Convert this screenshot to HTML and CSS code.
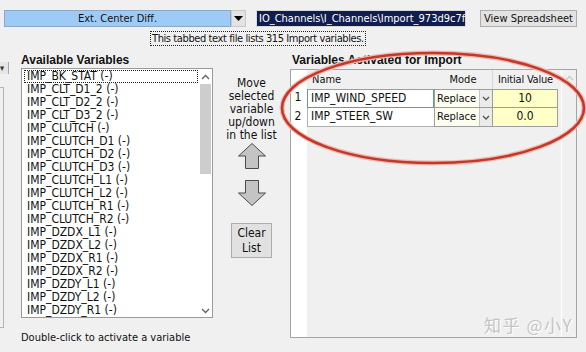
FILE: index.html
```html
<!DOCTYPE html>
<html lang="en">
<head>
  <meta charset="UTF-8">
  <title>Import Variables</title>
  <link rel="stylesheet" href="styles.css">
</head>
<body>
<div class="window">

  <!-- Top bar -->
  <div class="toolbar">
    <div class="combo">
      <span class="combo-value">Ext. Center Diff.</span>
      <span class="combo-btn"><svg width="9" height="5" viewBox="0 0 9 5"><polygon points="0,0 9,0 4.5,5" fill="#000"/></svg></span>
    </div>
    <div class="path-field">IO_Channels\I_Channels\Import_973d9c7f</div>
    <button class="btn view-btn">View Spreadsheet</button>
  </div>

  <div class="note-row">
    <span class="note">This tabbed text file lists 315 Import variables.</span>
  </div>

  <div class="main">
    <!-- left edge of the neighbouring panel -->
    <div class="edge-stub">
      <div class="stub-combo">&#9662;</div>
      <div class="stub-frame"></div>
    </div>

    <!-- Available variables -->
    <section class="available">
      <h2>Available Variables</h2>
      <div class="listbox">
        <ul class="var-list">
          <li class="focused">IMP_BK_STAT (-)</li>
          <li>IMP_CLT_D1_2 (-)</li>
          <li>IMP_CLT_D2_2 (-)</li>
          <li>IMP_CLT_D3_2 (-)</li>
          <li>IMP_CLUTCH (-)</li>
          <li>IMP_CLUTCH_D1 (-)</li>
          <li>IMP_CLUTCH_D2 (-)</li>
          <li>IMP_CLUTCH_D3 (-)</li>
          <li>IMP_CLUTCH_L1 (-)</li>
          <li>IMP_CLUTCH_L2 (-)</li>
          <li>IMP_CLUTCH_R1 (-)</li>
          <li>IMP_CLUTCH_R2 (-)</li>
          <li>IMP_DZDX_L1 (-)</li>
          <li>IMP_DZDX_L2 (-)</li>
          <li>IMP_DZDX_R1 (-)</li>
          <li>IMP_DZDX_R2 (-)</li>
          <li>IMP_DZDY_L1 (-)</li>
          <li>IMP_DZDY_L2 (-)</li>
          <li>IMP_DZDY_R1 (-)</li>
        </ul>
        <div class="vscroll">
          <svg class="chev" width="9" height="6" viewBox="0 0 9 6"><polyline points="1,5 4.5,1.5 8,5" fill="none" stroke="#606060" stroke-width="1.3"/></svg>
          <div class="thumb"></div>
          <div class="track"></div>
          <svg class="chev" width="9" height="6" viewBox="0 0 9 6"><polyline points="1,1 4.5,4.5 8,1" fill="none" stroke="#606060" stroke-width="1.3"/></svg>
        </div>
      </div>
      <p class="hint">Double-click to activate a variable</p>
    </section>

    <!-- Move / clear controls -->
    <div class="movers">
      <p class="move-text">Move<br>selected<br>variable<br>up/down<br>in the list</p>
      <svg class="arrow" width="28" height="26" viewBox="0 0 28 26"><polygon points="14,0.5 27.5,13 20.5,13 20.5,25.5 7.5,25.5 7.5,13 0.5,13" fill="#c4c4c4" stroke="#4a4a4a"/></svg>
      <svg class="arrow down" width="28" height="26" viewBox="0 0 28 26"><polygon points="14,25.5 27.5,13 20.5,13 20.5,0.5 7.5,0.5 7.5,13 0.5,13" fill="#c4c4c4" stroke="#4a4a4a"/></svg>
      <button class="btn clear-btn">Clear<br>List</button>
    </div>

    <!-- Activated variables -->
    <section class="activated">
      <h2>Variables Activated for Import</h2>
      <div class="grid-box">
        <div class="grid">
          <div class="grid-row head">
            <div class="cell num"></div>
            <div class="cell name">Name</div>
            <div class="cell mode">Mode</div>
            <div class="cell value">Initial Value</div>
          </div>
          <div class="grid-row">
            <div class="cell num">1</div>
            <div class="cell name active">IMP_WIND_SPEED</div>
            <div class="cell mode"><span>Replace</span><span class="drop"><svg width="8" height="5" viewBox="0 0 8 5"><polyline points="1,1 4,4 7,1" fill="none" stroke="#555" stroke-width="1.3"/></svg></span></div>
            <div class="cell value">10</div>
          </div>
          <div class="grid-row">
            <div class="cell num">2</div>
            <div class="cell name">IMP_STEER_SW</div>
            <div class="cell mode"><span>Replace</span><span class="drop"><svg width="8" height="5" viewBox="0 0 8 5"><polyline points="1,1 4,4 7,1" fill="none" stroke="#555" stroke-width="1.3"/></svg></span></div>
            <div class="cell value">0.0</div>
          </div>
        </div>
        <div class="grid-scroll">
          <svg width="9" height="6" viewBox="0 0 9 6"><polyline points="1,5 4.5,1.5 8,5" fill="none" stroke="#c8c8c8" stroke-width="1.3"/></svg>
        </div>
        <span class="watermark">知乎 @小Y</span>
      </div>
      <p class="hint">Double-click on a name box to deactivate a variable</p>
    </section>
  </div>

  <!-- red annotation ring -->
  <svg class="annotation" width="586" height="352" viewBox="0 0 586 352">
    <ellipse cx="433" cy="108" rx="151" ry="55" fill="none" stroke="#f2b8b0" stroke-width="5"/>
    <ellipse cx="433" cy="108" rx="151" ry="55" fill="none" stroke="#c0392b" stroke-width="2.6"/>
  </svg>
</div>
</body>
</html>
```

FILE: styles.css
```css
* {
  box-sizing: border-box;
}

body {
  margin: 0;
  background-color: #f0f0f0;
  font-family: "DejaVu Sans Condensed", "Liberation Sans", sans-serif;
  font-size: 11px;
  color: #111;
}

.window {
  position: relative;
  width: 586px;
  height: 352px;
  overflow: hidden;
}

/* Top bar */
.toolbar {
  display: flex;
  align-items: center;
  padding: 9px 0 0 4px;
  height: 28px;
}

.combo {
  display: flex;
  width: 242px;
  height: 17px;
}

.combo-value {
  flex: 1;
  background-color: #9ecbf6;
  border: 1px solid #8aa9c6;
  text-align: center;
  line-height: 15px;
}

.combo-btn {
  width: 15px;
  display: flex;
  align-items: center;
  justify-content: center;
  background-color: #e3e3e3;
  border: 1px solid #c8c8c8;
}

.path-field {
  margin-left: 11px;
  width: 208px;
  height: 15px;
  line-height: 15px;
  padding-left: 2px;
  background-color: #0f1d4f;
  color: #fff;
  outline: 1px solid #d8d8d8;
  white-space: nowrap;
  overflow: hidden;
}

.btn {
  font-family: inherit;
  font-size: 11px;
  color: #111;
  background-color: #e3e3e3;
  border: 1px solid #adadad;
  padding: 0;
  cursor: pointer;
}

.view-btn {
  margin-left: 15px;
  width: 97px;
  height: 17px;
  line-height: 15px;
  white-space: nowrap;
}

.note-row {
  padding: 3px 0 0 150px;
}

.note {
  display: inline-block;
  border: 1px dotted #222;
  padding: 0 1px;
  line-height: 13px;
  letter-spacing: -0.4px;
}

/* Main area */
.main {
  display: flex;
  margin-top: 4px;
}

.edge-stub {
  width: 9px;
}

.stub-combo {
  margin-top: 12px;
  height: 12px;
  font-size: 9px;
  line-height: 12px;
  color: #333;
  border-right: 1px solid #a8a8a8;
  background-color: #e6e6e6;
}

.stub-frame {
  margin-top: 13px;
  width: 4px;
  height: 241px;
  border: 1px solid #b4b4b4;
  border-left: none;
}

h2 {
  margin: 0;
  font-family: "Liberation Sans", sans-serif;
  font-size: 12px;
  font-weight: bold;
  line-height: 16px;
  padding-top: 2px;
}

.available {
  margin-left: 12px;
  width: 192px;
}

.listbox {
  display: flex;
  height: 250px;
  background-color: #fff;
  border: 1px solid #9a9a9a;
}

.var-list {
  flex: 1;
  list-style: none;
  margin: 0;
  padding: 1px 0 0 2px;
  font-size: 12px;
}

.var-list li {
  height: 13px;
  line-height: 13px;
  padding-left: 3px;
  white-space: nowrap;
}

.var-list li.focused {
  outline: 1px dotted #222;
  outline-offset: -1px;
  margin-right: 1px;
}

.vscroll {
  width: 13px;
  display: flex;
  flex-direction: column;
  align-items: center;
  padding: 5px 0 3px;
}

.vscroll .thumb {
  width: 11px;
  height: 90px;
  margin-top: 4px;
  background-color: #cdcdcd;
}

.vscroll .track {
  flex: 1;
}

.hint {
  margin: 12px 0 0;
  line-height: 15px;
  white-space: nowrap;
}

/* Middle controls */
.movers {
  width: 77px;
  display: flex;
  flex-direction: column;
  align-items: center;
  padding-top: 27px;
}

.move-text {
  margin: 0;
  text-align: center;
  font-size: 12px;
  line-height: 13px;
}

.arrow {
  margin-top: 1px;
}

.arrow.down {
  margin-top: 11px;
}

.clear-btn {
  margin-top: 17px;
  width: 41px;
  height: 35px;
  font-size: 12px;
  line-height: 15px;
  background-color: #e1e1e1;
}

/* Activated grid */
.activated {
  width: 287px;
}

.activated h2 {
  padding-left: 2px;
}

.grid-box {
  position: relative;
  display: flex;
  margin-top: 1px;
  height: 269px;
  border: 1px solid #a4a4a4;
}

.grid {
  flex: 1;
  background: linear-gradient(to right, #fff 16px, #f0f0f0 16px);
}

.grid-row {
  display: grid;
  grid-template-columns: 16px 127px 58px 66px;
  height: 19px;
  font-size: 12px;
}

.cell {
  line-height: 17px;
  white-space: nowrap;
}

.cell.num {
  text-align: center;
  padding-right: 2px;
}

.head .cell {
  line-height: 19px;
  font-size: 11px;
}

.head .name {
  padding-left: 5px;
}

.head .mode {
  text-align: center;
}

.head .value {
  text-align: center;
  letter-spacing: -0.2px;
  border-left: 1px solid #d6d6d6;
}

.grid-row:not(.head) .name {
  background-color: #fff;
  padding-left: 3px;
  border: 1px solid #b0b0b0;
  border-width: 0 0 1px 1px;
}

.grid-row:nth-child(2) .cell:not(.num) {
  border-top: 1px solid #9c9c9c;
}

.grid-row .name.active {
  border: 1px solid #5f9ab2;
}

.grid-row:not(.head) .mode {
  display: flex;
  font-size: 11px;
  background-color: #fdfdf0;
  border-bottom: 1px solid #9c9c9c;
  border-left: 1px solid #9c9c9c;
  padding-left: 2px;
}

.mode .drop {
  margin-left: auto;
  width: 13px;
  display: flex;
  align-items: center;
  justify-content: center;
  background-color: #ebebeb;
  border-left: 1px solid #c4c4c4;
}

.grid-row:not(.head) .value {
  text-align: center;
  background-color: #ffffc8;
  border: 1px solid #9c9c9c;
  border-width: 0 1px 1px 1px;
}

.grid-scroll {
  width: 15px;
  margin-left: 3px;
  border-left: 1px solid #fff;
  display: flex;
  justify-content: center;
  padding-top: 5px;
}

.watermark {
  position: absolute;
  right: 3px;
  bottom: 3px;
  font-family: "Noto Sans CJK SC", sans-serif;
  font-size: 17px;
  line-height: 19px;
  letter-spacing: 1.5px;
  color: #c4c4c4;
  text-shadow: 1px 1px 0 #fff;
}

.annotation {
  position: absolute;
  top: 0;
  left: 0;
  pointer-events: none;
}
```
